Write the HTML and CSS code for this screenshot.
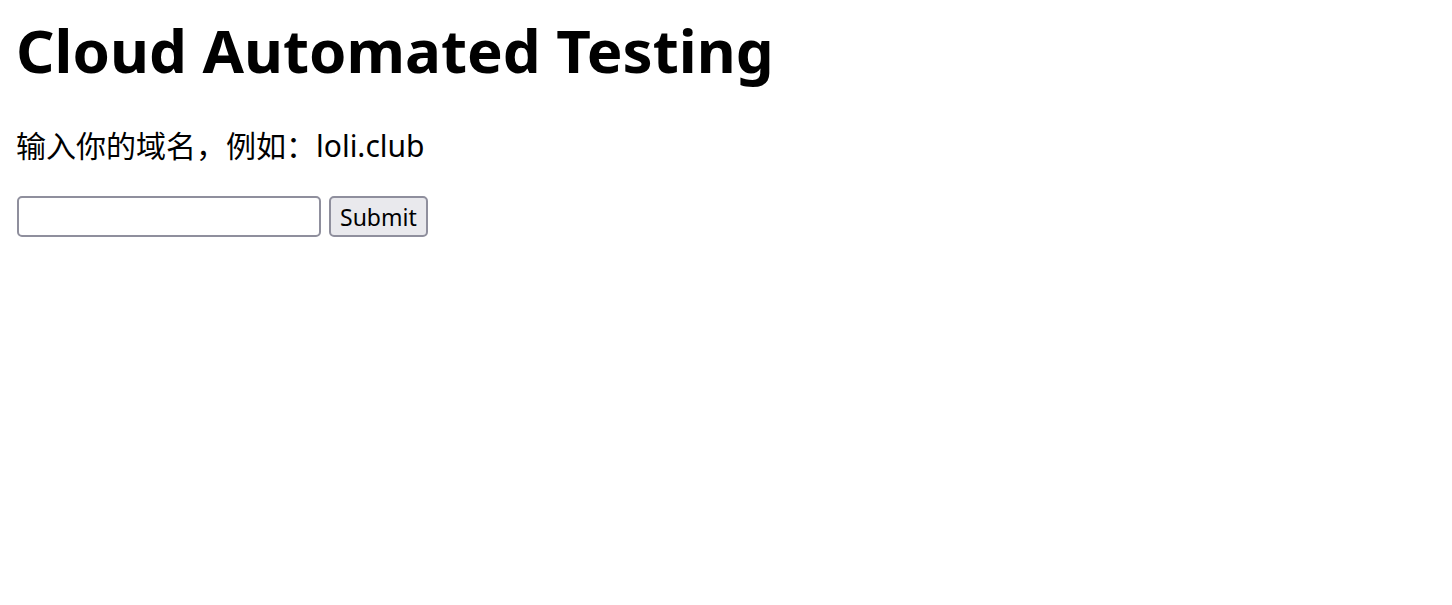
FILE: index.html
```html
<!DOCTYPE html>
<html lang="zh-CN">
<head>
<meta charset="utf-8">
<title>Cloud Automated Testing</title>
<link rel="stylesheet" href="styles.css">
</head>
<body>
<main class="page">
  <h1 class="title">Cloud Automated Testing</h1>
  <p class="hint">输入你的域名，例如：loli.club</p>
  <form class="form">
    <input class="field" type="text">
    <button class="submit" type="submit">Submit</button>
  </form>
</main>
</body>
</html>
```
FILE: styles.css
```css
html, body {
  margin: 0;
  padding: 0;
  background: #fff;
}
.page {
  padding: 0 16px;
  font-family: "Noto Sans", "Noto Sans CJK SC", sans-serif;
  color: #000;
}
.title {
  margin: 0;
  padding-top: 10px;
  font-size: 60px;
  line-height: 80px;
  font-weight: bold;
}
.hint {
  margin: 35px 0 0;
  font-size: 30px;
  line-height: 42px;
}
.form {
  margin-top: 29px;
  display: flex;
  gap: 8px;
  padding-left: 1px;
}
.field {
  box-sizing: border-box;
  width: 304px;
  height: 41px;
  margin: 0;
  border: 2px solid #8f8f9d;
  border-radius: 5px;
  background: #fff;
}
.submit {
  box-sizing: border-box;
  height: 41px;
  margin: 0;
  padding: 0 9px;
  border: 2px solid #8f8f9d;
  border-radius: 5px;
  background: #e9e9ed;
  font-family: "Noto Sans", sans-serif;
  font-size: 23px;
  color: #000;
}
```
